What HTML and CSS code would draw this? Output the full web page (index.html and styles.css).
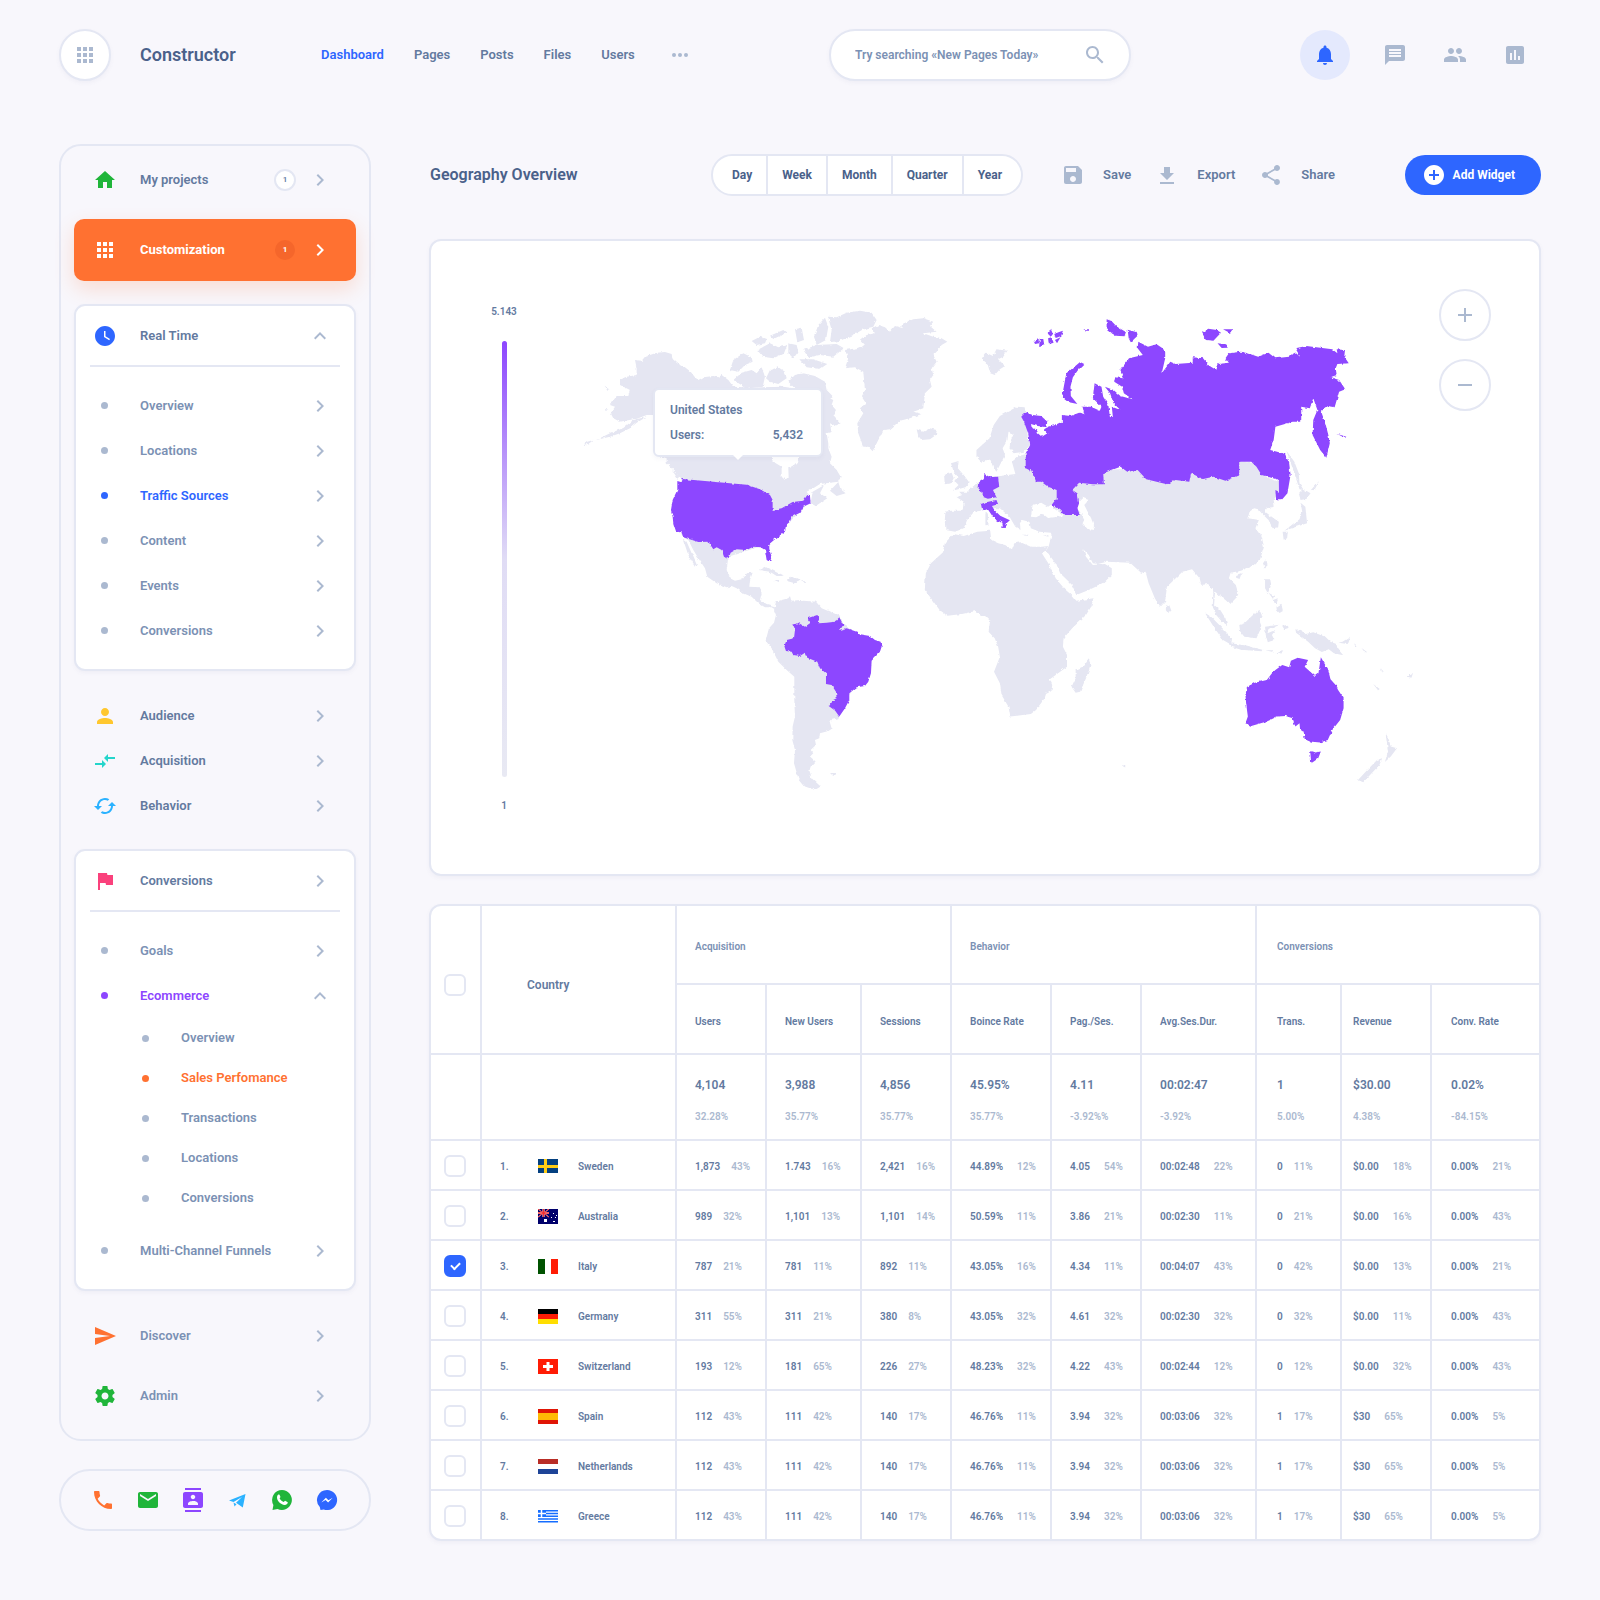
FILE: index.html
```html
<!DOCTYPE html>
<html lang="en">
<head>
  <meta charset="UTF-8">
  <meta name="viewport" content="width=device-width, initial-scale=1.0">
  <title>Constructor - Geography Overview</title>
  <link rel="stylesheet" href="styles.css">
</head>
<body>

  <!-- icon sprite -->
  <svg class="sprite" aria-hidden="true">
    <symbol id="i-apps" viewBox="0 0 24 24"><path d="M4 8h4V4H4v4zm6 12h4v-4h-4v4zm-6 0h4v-4H4v4zm0-6h4v-4H4v4zm6 0h4v-4h-4v4zm6-10v4h4V4h-4zm-6 4h4V4h-4v4zm6 6h4v-4h-4v4zm0 6h4v-4h-4v4z"/></symbol>
    <symbol id="i-dots" viewBox="0 0 24 24"><circle cx="6" cy="12" r="2"/><circle cx="12" cy="12" r="2"/><circle cx="18" cy="12" r="2"/></symbol>
    <symbol id="i-search" viewBox="0 0 24 24"><path d="M15.5 14h-.79l-.28-.27C15.41 12.59 16 11.11 16 9.5 16 5.91 13.09 3 9.5 3S3 5.91 3 9.5 5.91 16 9.5 16c1.61 0 3.09-.59 4.23-1.57l.27.28v.79l5 4.99L20.49 19l-4.99-5zm-6 0C7.01 14 5 11.99 5 9.5S7.01 5 9.5 5 14 7.01 14 9.5 11.99 14 9.5 14z"/></symbol>
    <symbol id="i-bell" viewBox="0 0 24 24"><path d="M12 22c1.1 0 2-.9 2-2h-4c0 1.1.89 2 2 2zm6-6v-5c0-3.07-1.64-5.64-4.5-6.32V4c0-.83-.67-1.5-1.5-1.5s-1.5.67-1.5 1.5v.68C7.63 5.36 6 7.92 6 11v5l-2 2v1h16v-1l-2-2z"/></symbol>
    <symbol id="i-message" viewBox="0 0 24 24"><path d="M20 2H4c-1.1 0-1.99.9-1.99 2L2 22l4-4h14c1.1 0 2-.9 2-2V4c0-1.1-.9-2-2-2zm-2 12H6v-2h12v2zm0-3H6V9h12v2zm0-3H6V6h12v2z"/></symbol>
    <symbol id="i-people" viewBox="0 0 24 24"><path d="M16 11c1.66 0 2.99-1.34 2.99-3S17.66 5 16 5c-1.66 0-3 1.34-3 3s1.34 3 3 3zm-8 0c1.66 0 2.99-1.34 2.99-3S9.66 5 8 5C6.34 5 5 6.34 5 8s1.34 3 3 3zm0 2c-2.33 0-7 1.17-7 3.5V19h14v-2.5c0-2.33-4.67-3.5-7-3.5zm8 0c-.29 0-.62.02-.97.05 1.16.84 1.97 1.97 1.97 3.45V19h6v-2.5c0-2.33-4.67-3.5-7-3.5z"/></symbol>
    <symbol id="i-chart" viewBox="0 0 24 24"><path d="M19 3H5c-1.1 0-2 .9-2 2v14c0 1.1.9 2 2 2h14c1.1 0 2-.9 2-2V5c0-1.1-.9-2-2-2zM9 17H7v-7h2v7zm4 0h-2V7h2v10zm4 0h-2v-4h2v4z"/></symbol>
    <symbol id="i-home" viewBox="0 0 24 24"><path d="M10 20v-6h4v6h5v-8h3L12 3 2 12h3v8z"/></symbol>
    <symbol id="i-clock" viewBox="0 0 24 24"><path d="M12 2C6.5 2 2 6.5 2 12s4.500 10 10 10 10-4.500 10-10S17.500 2 12 2zm4.200 14.200L11 13V7h1.500v5.200l4.500 2.700-.8 1.300z"/></symbol>
    <symbol id="i-person" viewBox="0 0 24 24"><path d="M12 12c2.210 0 4-1.790 4-4s-1.790-4-4-4-4 1.790-4 4 1.790 4 4 4zm0 2c-2.670 0-8 1.340-8 4v2h16v-2c0-2.660-5.330-4-8-4z"/></symbol>
    <symbol id="i-arrows" viewBox="0 0 24 24"><path d="M9 14H2v2h7v3l4-4-4-4v3zm6-1v-3h7V8h-7V5l-4 4 4 4z"/></symbol>
    <symbol id="i-cached" viewBox="0 0 24 24"><path d="M19 8l-4 4h3c0 3.310-2.690 6-6 6-1.010 0-1.970-.25-2.800-.7l-1.460 1.460C8.970 19.540 10.430 20 12 20c4.420 0 8-3.580 8-8h3l-4-4zM6 12c0-3.310 2.690-6 6-6 1.010 0 1.970.25 2.800.7l1.460-1.460C15.030 4.460 13.570 4 12 4c-4.420 0-8 3.580-8 8H1l4 4 4-4H6z"/></symbol>
    <symbol id="i-flag" viewBox="0 0 24 24"><path d="M14.400 6L14 4H5v17h2v-7h5.600l.4 2h7V6z"/></symbol>
    <symbol id="i-send" viewBox="0 0 24 24"><path d="M2 21l21-9L2 3v7l15 2-15 2z"/></symbol>
    <symbol id="i-gear" viewBox="0 0 24 24"><path d="M19.430 12.980c.04-.32.07-.64.07-.98s-.03-.66-.07-.98l2.110-1.650c.19-.15.24-.42.12-.64l-2-3.460c-.12-.22-.39-.3-.61-.22l-2.490 1c-.52-.4-1.080-.73-1.690-.98l-.38-2.650C14.460 2.180 14.250 2 14 2h-4c-.25 0-.46.18-.49.42l-.38 2.650c-.61.25-1.170.59-1.690.98l-2.490-1c-.23-.09-.49 0-.61.22l-2 3.460c-.13.22-.07.49.12.64l2.110 1.650c-.04.32-.07.65-.07.98s.03.66.07.98l-2.110 1.650c-.19.15-.24.42-.12.64l2 3.460c.12.22.39.3.61.22l2.490-1c.52.4 1.080.73 1.690.98l.38 2.650c.03.24.24.42.49.42h4c.25 0 .46-.18.49-.42l.38-2.650c.61-.25 1.170-.59 1.690-.98l2.490 1c.23.09.49 0 .61-.22l2-3.460c.12-.22.07-.49-.12-.64l-2.110-1.650zM12 15.500c-1.930 0-3.500-1.570-3.500-3.500s1.570-3.500 3.500-3.500 3.500 1.570 3.500 3.500-1.570 3.500-3.500 3.500z"/></symbol>
    <symbol id="i-right" viewBox="0 0 24 24"><path d="M10 6L8.600 7.400l4.600 4.600-4.600 4.600L10 18l6-6z"/></symbol>
    <symbol id="i-up" viewBox="0 0 24 24"><path d="M12 8l-6 6 1.400 1.400 4.600-4.600 4.600 4.600L18 14z"/></symbol>
    <symbol id="i-save" viewBox="0 0 24 24"><path d="M17 3H5c-1.110 0-2 .9-2 2v14c0 1.100.89 2 2 2h14c1.100 0 2-.9 2-2V7l-4-4zm-5 16c-1.660 0-3-1.340-3-3s1.340-3 3-3 3 1.340 3 3-1.340 3-3 3zm3-10H5V5h10v4z"/></symbol>
    <symbol id="i-export" viewBox="0 0 24 24"><path d="M19 10h-4V4H9v6H5l7 7 7-7zM5 19v2h14v-2H5z"/></symbol>
    <symbol id="i-share" viewBox="0 0 24 24"><path d="M18 16.080c-.76 0-1.440.3-1.960.77L8.910 12.700c.05-.23.09-.46.09-.7s-.04-.47-.09-.7l7.050-4.110c.54.5 1.250.81 2.040.81 1.660 0 3-1.340 3-3s-1.340-3-3-3-3 1.340-3 3c0 .24.04.47.09.7L8.040 9.810C7.500 9.310 6.790 9 6 9c-1.660 0-3 1.340-3 3s1.340 3 3 3c.79 0 1.500-.31 2.040-.81l7.120 4.160c-.05.21-.08.43-.08.65 0 1.610 1.310 2.920 2.920 2.920s2.920-1.310 2.920-2.920-1.310-2.920-2.920-2.920z"/></symbol>
    <symbol id="i-add" viewBox="0 0 24 24"><path d="M12 2C6.480 2 2 6.480 2 12s4.480 10 10 10 10-4.480 10-10S17.520 2 12 2zm5 11h-4v4h-2v-4H7v-2h4V7h2v4h4v2z"/></symbol>
    <symbol id="i-phone" viewBox="0 0 24 24"><path d="M6.620 10.790c1.440 2.830 3.760 5.140 6.590 6.590l2.200-2.200c.27-.27.67-.36 1.020-.24 1.120.37 2.330.57 3.570.57.55 0 1 .45 1 1V20c0 .55-.45 1-1 1-9.390 0-17-7.610-17-17 0-.55.45-1 1-1h3.500c.55 0 1 .45 1 1 0 1.250.2 2.450.57 3.570.11.35.03.74-.25 1.020l-2.200 2.200z"/></symbol>
    <symbol id="i-mail" viewBox="0 0 24 24"><path d="M20 4H4c-1.100 0-1.990.9-1.990 2L2 18c0 1.100.9 2 2 2h16c1.100 0 2-.9 2-2V6c0-1.100-.9-2-2-2zm0 4l-8 5-8-5V6l8 5 8-5v2z"/></symbol>
    <symbol id="i-contacts" viewBox="0 0 24 24"><path d="M20 0H4v2h16V0zM4 24h16v-2H4v2zM20 4H4c-1.100 0-2 .9-2 2v12c0 1.100.9 2 2 2h16c1.100 0 2-.9 2-2V6c0-1.100-.9-2-2-2zm-8 2.750c1.240 0 2.250 1.010 2.250 2.250s-1.010 2.250-2.250 2.250S9.750 10.240 9.750 9 10.760 6.750 12 6.750zM17 17H7v-1.500c0-1.670 3.330-2.500 5-2.500s5 .83 5 2.500V17z"/></symbol>
    <symbol id="i-telegram" viewBox="0 0 24 24"><path d="M20.500 6L4 12.600l4.500 1.500 8.500-5-6 5.700 6.800 4.700z"/><path d="M8.500 14.600l1 3.900 2-2.200z"/></symbol>
    <symbol id="i-whatsapp" viewBox="0 0 24 24"><path d="M12 2a10 10 0 0 0-8.600 15L2.500 22l5-1A10 10 0 1 0 12 2z"/><path fill="#fff" d="M8.300 6.600c.4-.3 1-.3 1.200.2l.9 1.900c.1.400 0 .7-.8 1.600.8 1.700 2.200 3 4 3.800l1.200-1.100c.2-.2.4-.2.7-.1l1.900 1c.4.200.4.500.3.900-.3 1.400-1.600 2.300-3 2.200-4.200-.6-8-4.500-7.700-8.100.1-1 .6-1.800 1.300-2.300z"/></symbol>
    <symbol id="i-messenger" viewBox="0 0 24 24"><path d="M12 2a10 10 0 0 0-7.200 16.900L5.500 22l3.200-.6A10 10 0 1 0 12 2z"/><path fill="#fff" d="M6.300 14.600l4.600-4.900 2.500 2.500 4.300-2.500-4.600 4.900-2.500-2.500z"/></symbol>

    <symbol id="f-se" viewBox="0 0 20 15"><path fill="#044080" d="M0 0h20v14H0z"/><path fill="#ffcc14" d="M6 0h3v14H6zM0 6h20v3H0z"/></symbol>
    <symbol id="f-au" viewBox="0 0 20 15"><path fill="#00006b" d="M0 0h20v15H0z"/><path stroke="#fff" d="M0 0l11 8M11 0L0 8"/><path stroke="#fff" stroke-width="2" d="M5.500 0v8M0 4h11"/><path stroke="#f22f2f" stroke-width="1" d="M0 0l11 8M11 0L0 8"/><path stroke="#f22f2f" stroke-width="1.500" d="M5.500 0v8M0 4h11"/><path fill="#fff" d="M6 10h3v3H6zM15 4h1v1h-1zM18 6h1v1h-1zM13 8h1v1h-1zM15 12h2v1h-2zM17 8h1v1h-1z"/></symbol>
    <symbol id="f-it" viewBox="0 0 20 15"><path fill="#fff" d="M0 0h20v15H0z"/><path fill="#005200" d="M0 0h7v15H0z"/><path fill="#ff1c05" d="M13 0h7v15h-7z"/></symbol>
    <symbol id="f-de" viewBox="0 0 20 15"><path d="M0 0h20v5H0z"/><path fill="#ff1c05" d="M0 5h20v5H0z"/><path fill="#ffde00" d="M0 10h20v5H0z"/></symbol>
    <symbol id="f-ch" viewBox="0 0 20 15"><path fill="#ff1c05" d="M0 0h20v15H0z"/><path fill="#fff" d="M8.500 3h3v3H15v3h-3.500v3h-3V9H5V6h3.500z"/></symbol>
    <symbol id="f-es" viewBox="0 0 20 15"><path fill="#e01505" d="M0 0h20v15H0z"/><path fill="#ffba05" d="M0 4h20v7H0z"/></symbol>
    <symbol id="f-nl" viewBox="0 0 20 15"><path fill="#fff" d="M0 0h20v15H0z"/><path fill="#b92d26" d="M0 0h20v5H0z"/><path fill="#1e4497" d="M0 10h20v5H0z"/></symbol>
    <symbol id="f-gr" viewBox="0 0 20 15"><path fill="#fff" d="M0 1h20v13H0z"/><path stroke="#156dff" stroke-width="1.500" d="M0 1.750h20M0 4.500h20M0 7.250h20M0 10h20M0 12.750h20"/><path fill="#156dff" d="M0 1h8v7H0z"/><path stroke="#fff" stroke-width="1.500" d="M3.500 1v7M0 4.500h8"/></symbol>
  </svg>

  <header class="header">
    <div class="brand">
      <button class="apps-btn" aria-label="Apps"><svg class="icon"><use href="#i-apps"/></svg></button>
      <a class="brand-name" href="#">Constructor</a>
    </div>
    <nav class="top-nav">
      <a class="active" href="#">Dashboard</a>
      <a href="#">Pages</a>
      <a href="#">Posts</a>
      <a href="#">Files</a>
      <a href="#">Users</a>
      <button class="more" aria-label="More"><svg class="icon"><use href="#i-dots"/></svg></button>
    </nav>
    <form class="search">
      <input type="text" aria-label="Search" placeholder="Try searching «New Pages Today»">
      <button type="button" aria-label="Find"><svg class="icon"><use href="#i-search"/></svg></button>
    </form>
    <div class="header-actions">
      <button class="round bell" aria-label="Notifications"><svg class="icon"><use href="#i-bell"/></svg></button>
      <button class="round" aria-label="Messages"><svg class="icon"><use href="#i-message"/></svg></button>
      <button class="round" aria-label="People"><svg class="icon"><use href="#i-people"/></svg></button>
      <button class="round" aria-label="Reports"><svg class="icon"><use href="#i-chart"/></svg></button>
    </div>
  </header>

  <div class="layout">
    <aside class="side">
      <nav class="sidebar">
        <a class="item" href="#"><svg class="icon green"><use href="#i-home"/></svg><span class="label">My projects</span><span class="badge">1</span><svg class="icon chevron"><use href="#i-right"/></svg></a>
        <a class="item custom" href="#"><svg class="icon"><use href="#i-apps"/></svg><span class="label">Customization</span><span class="badge">1</span><svg class="icon chevron"><use href="#i-right"/></svg></a>

        <section class="group">
          <a class="item group-head" href="#"><svg class="icon blue"><use href="#i-clock"/></svg><span class="label">Real Time</span><svg class="icon chevron"><use href="#i-up"/></svg></a>
          <div class="group-list">
            <a class="item light" href="#"><i class="dot"></i><span class="label">Overview</span><svg class="icon chevron"><use href="#i-right"/></svg></a>
            <a class="item light" href="#"><i class="dot"></i><span class="label">Locations</span><svg class="icon chevron"><use href="#i-right"/></svg></a>
            <a class="item light is-blue" href="#"><i class="dot"></i><span class="label">Traffic Sources</span><svg class="icon chevron"><use href="#i-right"/></svg></a>
            <a class="item light" href="#"><i class="dot"></i><span class="label">Content</span><svg class="icon chevron"><use href="#i-right"/></svg></a>
            <a class="item light" href="#"><i class="dot"></i><span class="label">Events</span><svg class="icon chevron"><use href="#i-right"/></svg></a>
            <a class="item light" href="#"><i class="dot"></i><span class="label">Conversions</span><svg class="icon chevron"><use href="#i-right"/></svg></a>
          </div>
        </section>

        <div class="plain">
          <a class="item" href="#"><svg class="icon yellow"><use href="#i-person"/></svg><span class="label">Audience</span><svg class="icon chevron"><use href="#i-right"/></svg></a>
          <a class="item" href="#"><svg class="icon teal"><use href="#i-arrows"/></svg><span class="label">Acquisition</span><svg class="icon chevron"><use href="#i-right"/></svg></a>
          <a class="item" href="#"><svg class="icon sky"><use href="#i-cached"/></svg><span class="label">Behavior</span><svg class="icon chevron"><use href="#i-right"/></svg></a>
        </div>

        <section class="group">
          <a class="item group-head" href="#"><svg class="icon pink"><use href="#i-flag"/></svg><span class="label">Conversions</span><svg class="icon chevron"><use href="#i-right"/></svg></a>
          <div class="group-list">
            <a class="item light" href="#"><i class="dot"></i><span class="label">Goals</span><svg class="icon chevron"><use href="#i-right"/></svg></a>
            <a class="item light is-purple" href="#"><i class="dot"></i><span class="label">Ecommerce</span><svg class="icon chevron"><use href="#i-up"/></svg></a>
            <div class="sub-list">
              <a class="item light" href="#"><i class="dot"></i><span class="label">Overview</span></a>
              <a class="item light is-orange" href="#"><i class="dot"></i><span class="label">Sales Perfomance</span></a>
              <a class="item light" href="#"><i class="dot"></i><span class="label">Transactions</span></a>
              <a class="item light" href="#"><i class="dot"></i><span class="label">Locations</span></a>
              <a class="item light" href="#"><i class="dot"></i><span class="label">Conversions</span></a>
            </div>
            <a class="item light" href="#"><i class="dot"></i><span class="label">Multi-Channel Funnels</span><svg class="icon chevron"><use href="#i-right"/></svg></a>
          </div>
        </section>

        <div class="footer-links">
          <a class="item light" href="#"><svg class="icon orange"><use href="#i-send"/></svg><span class="label">Discover</span><svg class="icon chevron"><use href="#i-right"/></svg></a>
          <a class="item light" href="#"><svg class="icon green"><use href="#i-gear"/></svg><span class="label">Admin</span><svg class="icon chevron"><use href="#i-right"/></svg></a>
        </div>
      </nav>

      <div class="social">
        <a href="#" aria-label="Phone"><svg class="icon orange"><use href="#i-phone"/></svg></a>
        <a href="#" aria-label="Mail"><svg class="icon green"><use href="#i-mail"/></svg></a>
        <a href="#" aria-label="Contacts"><svg class="icon purple"><use href="#i-contacts"/></svg></a>
        <a href="#" aria-label="Telegram"><svg class="icon sky"><use href="#i-telegram"/></svg></a>
        <a href="#" aria-label="WhatsApp"><svg class="icon green"><use href="#i-whatsapp"/></svg></a>
        <a href="#" aria-label="Messenger"><svg class="icon blue"><use href="#i-messenger"/></svg></a>
      </div>
    </aside>

    <main class="main">
      <div class="toolbar">
        <h1>Geography Overview</h1>
        <div class="periods">
          <button>Day</button>
          <button>Week</button>
          <button>Month</button>
          <button>Quarter</button>
          <button>Year</button>
        </div>
        <div class="tools">
          <button><svg class="icon"><use href="#i-save"/></svg>Save</button>
          <button><svg class="icon"><use href="#i-export"/></svg>Export</button>
          <button><svg class="icon"><use href="#i-share"/></svg>Share</button>
        </div>
        <button class="add-widget"><svg class="icon"><use href="#i-add"/></svg>Add Widget</button>
      </div>

      <section class="card map-card">
        <div class="legend">
          <span>5.143</span>
          <div class="legend-bar"></div>
          <span>1</span>
        </div>
        <div class="map">
          <svg class="world" viewBox="0 0 840 500" role="img" aria-label="Users by country">
            <defs>
              <!-- roughens the coastlines -->
              <filter id="coast" x="0" y="0" width="100%" height="100%">
                <feTurbulence type="fractalNoise" baseFrequency="0.25" numOctaves="2" seed="4" result="n"/>
                <feDisplacementMap in="SourceGraphic" in2="n" scale="3" xChannelSelector="R" yChannelSelector="G"/>
              </filter>
            </defs>
            <g filter="url(#coast)">
              <!-- americas -->
              <g transform="translate(-10 -10) scale(.3333)">
                <g class="land">
                  <path d="M195 210L215 212 225 200 240 195 260 188 285 186 305 192 308 207 322 220 345 232 362 245 375 262 385 270 400 262 430 258 445 262 455 255 475 270 490 290 520 292 545 296 580 292 640 290 680 296 720 290 760 292 770 320 790 330 785 345 798 360 790 375 812 400 795 408 780 400 785 425 770 430 775 460 775 475 785 500 780 520 800 540 812 560 805 575 780 578 750 582 730 595 710 605 720 620 715 640 690 665 640 715 600 760 475 800 470 840 480 865 495 872 515 868 528 850 548 848 540 870 538 890 570 892 575 910 570 930 590 942 612 948 618 960 605 952 585 952 565 940 545 920 520 910 500 895 485 888 470 892 440 880 412 860 405 835 385 805 370 780 355 750 338 742 330 720 315 650 335 570 315 545 290 520 290 505 260 495 255 400 250 375 230 375 205 385 190 388 150 395 130 385 122 370 135 350 120 345 140 318 175 318 180 300 150 285 150 268 170 260 200 255 200 235z"/>
                  <path d="M338 745L350 755 365 790 382 828 375 828 355 795z"/>
                  <path d="M230 380L200 398 180 415 150 430 120 440 78 450 120 430 160 414 190 390zM35 467L52 455 72 449 58 460zM104 290l14 8-4 6zM102 358l12 0-6 5z"/>
                  <path d="M480 240L490 210 520 190 545 202 548 215 525 225 505 245zM490 270L515 248 545 240 560 250 575 232 585 260 578 292 530 295zM588 265L600 240 625 232 645 245 650 265 625 282 600 275z"/>
                  <path d="M545 153L570 140 590 148 585 160 560 165zM600 137L640 120 650 128 610 147zM562 180L600 160 625 172 652 165 642 190 610 205 578 200zM675 118L695 113 702 150 682 157zM655 160L680 165 685 185 670 205 655 190zM732 140L745 105 765 83 775 110 768 150 740 165z"/>
                  <path d="M774 80L800 82 830 68 870 62 905 68 920 90 910 110 880 118 850 135 810 152 780 157 785 120zM700 180L740 165 800 162 822 175 790 200 750 195 715 202zM688 208L730 208 772 222 750 237 710 232zM655 275L675 255 700 250 735 258 765 275 770 300 790 320 760 340 700 320z"/>
                  <path d="M825 180L860 175 885 165 872 150 890 135 915 130 905 115 925 105 945 112 960 125 975 108 1000 115 990 105 1030 88 1060 85 1090 95 1080 108 1100 125 1060 130 1090 140 1115 145 1132 155 1115 165 1100 185 1090 195 1100 215 1085 235 1090 255 1080 270 1085 290 1065 310 1060 355 1030 365 1055 372 1020 385 990 392 960 418 940 420 925 450 908 484 895 470 880 470 865 430 862 400 880 370 870 355 888 340 875 320 885 300 880 245 855 232 825 235 835 205z"/>
                  <path d="M1040 418L1060 425 1080 415 1100 420 1098 435 1080 448 1055 450 1045 438z"/>
                  <path d="M566 840L585 830 610 842 642 858 620 858 600 845zM648 872L660 860 692 868 675 880zM613 870h14v6zM692 871h13v5zM780 602L805 576 812 598 827 610 800 618zM728 605L762 586 750 610 772 625 737 648 722 640zM306 540l24 20-6 8z"/>
                  <path d="M618 935L635 930 655 925 660 918 665 935 700 932 738 935 755 955 780 965 812 978 818 1000 880 1050 885 1150 820 1240 805 1285 778 1292 785 1315 770 1325 750 1330 748 1345 735 1350 738 1365 722 1380 730 1390 720 1400 737 1415 722 1430 718 1445 725 1465 752 1490 735 1500 705 1490 685 1465 672 1420 675 1380 667 1350 668 1310 675 1280 673 1230 673 1160 650 1140 625 1115 605 1075 587 1052 597 1015 612 998 618 975 612 960z"/>
                  <path d="M780 1449h18l-8 9z"/>
                </g>
                <path class="sea" d="M600 495L615 518 635 530 635 560 645 570 656 560 655 535 672 525 684 512 684 495z"/>
                <g class="land-active">
                  <path d="M338 567L530 584 570 598 600 615 608 630 608 660 635 655 668 636 700 632 712 615 720 618 722 640 700 650 690 668 665 680 660 695 648 705 645 725 615 748 598 762 598 780 605 800 600 816 590 810 585 780 572 772 550 770 530 780 500 778 482 788 475 808 462 800 455 780 440 772 430 778 415 755 385 756 340 742 335 728 318 724 310 700 308 680 303 660 308 630 322 600 322 573 335 577z"/>
                  <path d="M643 1068L650 1050 672 1045 675 1020 668 1005 685 998 705 1010 722 998 712 985 742 975 748 1000 770 998 795 995 808 982 820 1005 810 1020 830 1015 860 1025 868 1033 900 1038 915 1050 932 1055 935 1070 930 1085 905 1112 903 1150 895 1175 885 1188 860 1192 838 1210 838 1230 825 1255 808 1280 795 1262 776 1248 785 1232 800 1225 798 1205 785 1185 768 1182 768 1150 750 1135 742 1115 712 1103 705 1088 690 1098 670 1095 665 1085 648 1083z"/>
                </g>
              </g>
              <!-- europe, africa, asia, oceania -->
              <g transform="translate(320 -10) scale(.3444 .3333)">
                <g class="land">
                  <path d="M238 205L250 188 270 198 280 178 312 182 300 200 285 208 305 228 290 238 275 255 262 250 255 225 240 212z"/>
                  <path d="M128 555L150 548 156 565 148 580 130 583zM148 520L170 513 168 535 185 555 202 578 190 592 153 602 170 585 158 572 168 560 156 545z"/>
                  <path d="M222 480L260 445 272 405 290 378 340 350 362 352 365 372 355 385 368 410 372 450 378 465 360 485 330 490 318 475 320 455 330 432 315 425 312 450 298 475 305 495 290 525 280 545 270 530 262 508 235 515 222 500z"/>
                  <path d="M132 665L145 662 182 662 185 635 165 622 180 615 172 605 195 605 220 582 232 575 248 572 245 552 258 560 290 558 335 552 325 515 345 498 375 490 380 540 600 540 1000 515 1030 520 1060 560 1100 575 1098 610 1085 630 1088 650 1065 655 1060 665 1085 685 1100 695 1098 712 1082 715 1070 690 1050 670 1040 658 1028 655 1015 665 1010 685 1030 688 1042 690 1032 715 1050 740 1057 770 1045 810 1030 825 990 842 960 848 955 865 975 885 982 910 975 925 958 943 945 930 925 915 915 905 912 945 930 960 945 985 950 1005 935 995 918 975 908 950 910 905 895 882 875 885 870 865 848 838 820 845 775 890 770 935 755 952 740 925 722 880 713 845 700 848 668 818 600 815 575 822 560 820 548 795 532 778 540 800 560 825 595 822 615 835 615 855 590 880 548 900 512 915 495 880 465 850 455 825 430 790 422 785 432 768 440 735 438 728 405 725 380 715 375 695 355 690 348 700 350 720 335 710 318 680 290 655 240 655 235 662 215 665 195 690 185 715 160 725 132 720 130 690z"/>
                  <path d="M155 732L185 738 225 725 262 722 265 750 285 760 305 765 325 778 332 760 350 757 380 770 412 770 430 768 422 786 412 790 432 822 452 865 478 897 498 915 512 932 562 925 555 950 540 975 500 1015 475 1045 473 1070 485 1095 485 1130 435 1168 442 1185 440 1200 425 1208 420 1225 395 1260 380 1272 345 1277 320 1280 315 1250 295 1215 290 1180 273 1145 290 1100 285 1070 275 1045 257 1025 262 990 250 978 235 978 220 963 180 972 138 977 115 960 90 925 72 900 75 850 90 820 125 787 130 760z"/>
                  <path d="M510 1140L530 1130 548 1105 553 1125 540 1165 523 1205 510 1208 498 1190 510 1165zM772 943l10 3 6 16-10 7-6-8z"/>
                  <path d="M885 968L905 982 930 1008 964 1045 962 1064 938 1050 915 1017zM960 1060L1000 1066 1052 1079 1050 1084 990 1079 962 1070zM1060 1081h24v5zM1090 1092l23-12-6 11z"/>
                  <path d="M985 1005L1000 1000 1040 960 1054 975 1045 995 1050 1010 1035 1045 1000 1040 988 1025zM1060 1010L1102 1004 1070 1020 1067 1030 1090 1020 1080 1035 1087 1050 1068 1057 1062 1035z"/>
                  <path d="M1060 868L1072 868 1076 890 1068 910 1060 895zM1093 950l14-9 5 22-10 6-8-9zM1070 908l16 10-3 9zM1083 930l14-5-3 17zM1054 820l9-13 4 16-7 14zM976 855l16-6-6 18-10-4z"/>
                  <path d="M1148 1018L1165 1020 1175 1033 1200 1027 1235 1040 1250 1055 1267 1062 1270 1075 1287 1096 1260 1090 1245 1078 1225 1086 1205 1075 1185 1055 1150 1028zM1110 1008l16-4 2 10-12 4zM1273 1058L1290 1054 1306 1043 1300 1062zM1319 1060l8 8-5 2zM1340 1074l16 12-5 3zM1397 1135l7 10-4 4zM1374 1182l20 16-6 3zM1473 1160l16-9-4 12z"/>
                  <path d="M1158 610L1170 596 1192 610 1180 627 1163 630zM1163 638L1177 650 1182 700 1160 707 1140 714 1116 722 1140 703 1160 688 1168 665zM1111 725l15 0-2 20-10 4zM1122 482L1145 515 1158 550 1160 580 1172 600 1160 598 1145 550zM1193 600l24-27-14 28z"/>
                  <path d="M1410 1330L1418 1345 1425 1370 1443 1375 1425 1400 1408 1416 1417 1385zM1400 1405L1392 1425 1345 1477 1330 1470 1350 1448 1385 1410zM248 670h7l2 34-9 2zM415 736h16v4zM353 734h20v4zM646 1428h8v5z"/>
                </g>
                <path class="sea" d="M380 680L385 645 410 638 430 650 445 640 445 655 475 675 460 680 430 684 415 672 395 682zM508 645L530 623 548 630 535 645 545 665 555 685 568 720 545 718 530 700 535 690 525 670z"/>
                <g class="land-active">
                  <path d="M352 380L365 367 385 375 410 378 428 395 425 412 400 408 380 402 385 415 398 418 400 430 412 440 428 430 418 418 432 410 450 405 470 395 470 375 495 378 520 368 535 372 530 350 555 350 580 362 585 350 560 325 565 280 585 290 590 320 605 345 610 385 618 380 615 350 640 360 620 340 610 310 595 290 620 300 640 318 675 328 650 310 645 290 622 275 625 262 650 265 640 240 665 205 705 195 690 175 692 155 720 170 745 163 770 180 770 205 760 250 785 215 800 222 850 218 850 202 880 205 895 225 918 240 925 222 955 218 945 205 955 190 990 185 1010 190 1040 200 1070 188 1090 205 1130 200 1145 185 1162 200 1148 175 1180 168 1255 178 1270 190 1268 178 1292 180 1290 200 1303 220 1270 222 1265 235 1268 255 1250 262 1275 270 1293 298 1275 305 1262 352 1240 348 1222 362 1235 400 1245 440 1248 460 1238 503 1220 480 1198 435 1200 390 1212 360 1200 325 1190 355 1165 350 1165 395 1140 395 1090 410 1085 450 1075 480 1095 485 1118 492 1130 520 1134 555 1125 610 1110 628 1092 628 1090 600 1100 605 1100 570 1050 555 1035 530 1020 515 985 515 985 555 945 572 910 560 880 567 845 550 840 575 800 570 775 583 745 575 715 568 690 540 660 545 640 530 590 550 592 583 560 583 520 578 500 600 515 610 520 640 515 655 522 675 480 675 465 660 440 645 455 625 455 600 430 590 410 575 395 575 385 545 365 535 365 490 378 465 372 430 360 395z"/>
                  <path d="M523 216L535 222 517 240 502 262 495 290 496 318 515 342 488 336 470 322 476 288 483 250 503 233z"/>
                  <path d="M388 153L402 148 404 160 392 162zM406 145L416 147 419 166 404 171zM430 132L438 118 444 132 438 140zM430 145L440 142 446 158 432 163zM448 132L462 126 473 122 468 138 452 144zM450 150L466 142 456 160z"/>
                  <path d="M600 88L614 93 630 110 656 126 652 139 625 137 600 117zM661 119L688 127 690 137 670 157 664 145zM877 128L895 116 920 120 932 128 910 152 888 150zM938 118h28l-8 11zM922 160l22 3 8 10-18 1zM535 118h11v5zM1270 432l26 8-4 4z"/>
                  <path d="M230 577L243 568 245 552 262 562 285 560 288 590 270 600 280 622 255 626 240 620 240 607 228 602z"/>
                  <path d="M235 642L250 637 280 630 285 643 267 648 274 660 291 677 319 691 311 698 306 713 297 714 299 701 272 684 255 658 239 661z"/>
                  <path d="M1008 1190L1030 1178 1065 1170 1080 1150 1090 1140 1110 1125 1130 1132 1135 1112 1155 1103 1185 1110 1175 1130 1205 1158 1215 1150 1222 1102 1235 1125 1242 1135 1250 1168 1265 1185 1272 1200 1288 1225 1288 1255 1278 1290 1255 1320 1242 1350 1220 1358 1190 1355 1175 1348 1172 1325 1162 1322 1160 1300 1148 1310 1140 1285 1120 1278 1095 1280 1065 1295 1020 1308 1003 1300 1010 1280 1005 1240 1003 1215z"/>
                  <path d="M1191 1383L1205 1388 1222 1385 1214 1406 1194 1420z"/>
                </g>
              </g>
            </g>
          </svg>
          <div class="map-tip">
            <strong>United States</strong>
            <div class="map-tip-row"><span>Users:</span><span>5,432</span></div>
          </div>
        </div>
        <div class="zoom">
          <button class="zoom-in" aria-label="Zoom in"></button>
          <button class="zoom-out" aria-label="Zoom out"></button>
        </div>
      </section>

      <section class="card table-card">
        <table class="stats">
          <colgroup>
            <col class="c-check"><col class="c-country"><col class="c-90"><col class="c-95"><col class="c-90"><col class="c-100"><col class="c-90"><col class="c-115"><col class="c-85"><col class="c-90"><col class="c-last">
          </colgroup>
          <thead>
            <tr class="head-groups">
              <th class="check" rowspan="2"><input type="checkbox" aria-label="Select all"></th>
              <th class="country-head" rowspan="2">Country</th>
              <th colspan="3">Acquisition</th>
              <th colspan="3">Behavior</th>
              <th class="wide" colspan="3">Conversions</th>
            </tr>
            <tr class="head-cols">
              <th>Users</th><th>New Users</th><th>Sessions</th>
              <th>Boince Rate</th><th>Pag./Ses.</th><th>Avg.Ses.Dur.</th>
              <th class="wide">Trans.</th><th class="tight">Revenue</th><th class="last">Conv. Rate</th>
            </tr>
          </thead>
          <tbody>
            <tr class="totals">
              <td></td><td></td>
              <td><b>4,104</b><small>32.28%</small></td>
              <td><b>3,988</b><small>35.77%</small></td>
              <td><b>4,856</b><small>35.77%</small></td>
              <td><b>45.95%</b><small>35.77%</small></td>
              <td><b>4.11</b><small>-3.92%%</small></td>
              <td><b>00:02:47</b><small>-3.92%</small></td>
              <td class="wide"><b>1</b><small>5.00%</small></td>
              <td class="tight"><b>$30.00</b><small>4.38%</small></td>
              <td class="last"><b>0.02%</b><small>-84.15%</small></td>
            </tr>
            <tr>
              <td class="check"><input type="checkbox" aria-label="Sweden"></td>
              <td><div class="country"><span>1.</span><svg class="flag"><use href="#f-se"/></svg>Sweden</div></td>
              <td>1,873<small>43%</small></td><td>1.743<small>16%</small></td><td>2,421<small>16%</small></td>
              <td>44.89%<small>12%</small></td><td>4.05<small>54%</small></td><td>00:02:48<small>22%</small></td>
              <td class="wide">0<small>11%</small></td><td class="tight">$0.00<small>18%</small></td><td class="last">0.00%<small>21%</small></td>
            </tr>
            <tr>
              <td class="check"><input type="checkbox" aria-label="Australia"></td>
              <td><div class="country"><span>2.</span><svg class="flag"><use href="#f-au"/></svg>Australia</div></td>
              <td>989<small>32%</small></td><td>1,101<small>13%</small></td><td>1,101<small>14%</small></td>
              <td>50.59%<small>11%</small></td><td>3.86<small>21%</small></td><td>00:02:30<small>11%</small></td>
              <td class="wide">0<small>21%</small></td><td class="tight">$0.00<small>16%</small></td><td class="last">0.00%<small>43%</small></td>
            </tr>
            <tr>
              <td class="check"><input type="checkbox" aria-label="Italy" checked></td>
              <td><div class="country"><span>3.</span><svg class="flag"><use href="#f-it"/></svg>Italy</div></td>
              <td>787<small>21%</small></td><td>781<small>11%</small></td><td>892<small>11%</small></td>
              <td>43.05%<small>16%</small></td><td>4.34<small>11%</small></td><td>00:04:07<small>43%</small></td>
              <td class="wide">0<small>42%</small></td><td class="tight">$0.00<small>13%</small></td><td class="last">0.00%<small>21%</small></td>
            </tr>
            <tr>
              <td class="check"><input type="checkbox" aria-label="Germany"></td>
              <td><div class="country"><span>4.</span><svg class="flag"><use href="#f-de"/></svg>Germany</div></td>
              <td>311<small>55%</small></td><td>311<small>21%</small></td><td>380<small>8%</small></td>
              <td>43.05%<small>32%</small></td><td>4.61<small>32%</small></td><td>00:02:30<small>32%</small></td>
              <td class="wide">0<small>32%</small></td><td class="tight">$0.00<small>11%</small></td><td class="last">0.00%<small>43%</small></td>
            </tr>
            <tr>
              <td class="check"><input type="checkbox" aria-label="Switzerland"></td>
              <td><div class="country"><span>5.</span><svg class="flag"><use href="#f-ch"/></svg>Switzerland</div></td>
              <td>193<small>12%</small></td><td>181<small>65%</small></td><td>226<small>27%</small></td>
              <td>48.23%<small>32%</small></td><td>4.22<small>43%</small></td><td>00:02:44<small>12%</small></td>
              <td class="wide">0<small>12%</small></td><td class="tight">$0.00<small>32%</small></td><td class="last">0.00%<small>43%</small></td>
            </tr>
            <tr>
              <td class="check"><input type="checkbox" aria-label="Spain"></td>
              <td><div class="country"><span>6.</span><svg class="flag"><use href="#f-es"/></svg>Spain</div></td>
              <td>112<small>43%</small></td><td>111<small>42%</small></td><td>140<small>17%</small></td>
              <td>46.76%<small>11%</small></td><td>3.94<small>32%</small></td><td>00:03:06<small>32%</small></td>
              <td class="wide">1<small>17%</small></td><td class="tight">$30<small>65%</small></td><td class="last">0.00%<small>5%</small></td>
            </tr>
            <tr>
              <td class="check"><input type="checkbox" aria-label="Netherlands"></td>
              <td><div class="country"><span>7.</span><svg class="flag"><use href="#f-nl"/></svg>Netherlands</div></td>
              <td>112<small>43%</small></td><td>111<small>42%</small></td><td>140<small>17%</small></td>
              <td>46.76%<small>11%</small></td><td>3.94<small>32%</small></td><td>00:03:06<small>32%</small></td>
              <td class="wide">1<small>17%</small></td><td class="tight">$30<small>65%</small></td><td class="last">0.00%<small>5%</small></td>
            </tr>
            <tr>
              <td class="check"><input type="checkbox" aria-label="Greece"></td>
              <td><div class="country"><span>8.</span><svg class="flag"><use href="#f-gr"/></svg>Greece</div></td>
              <td>112<small>43%</small></td><td>111<small>42%</small></td><td>140<small>17%</small></td>
              <td>46.76%<small>11%</small></td><td>3.94<small>32%</small></td><td>00:03:06<small>32%</small></td>
              <td class="wide">1<small>17%</small></td><td class="tight">$30<small>65%</small></td><td class="last">0.00%<small>5%</small></td>
            </tr>
          </tbody>
        </table>
      </section>
    </main>
  </div>
</body>
</html>
```

FILE: styles.css
```css
:root {
  --bg: #f8f7fc;
  --line: #e4e7f3;
  --dark: #4a618a;
  --text: #637a9f;
  --light: #7b91b4;
  --muted: #abb9d0;
  --blue: #2e66ff;
  --purple: #8d46ff;
  --orange: #ff7131;
  --green: #20b53a;
}

* {
  box-sizing: border-box;
}

body {
  margin: 0;
  padding: 29px 59px 59px;
  background: var(--bg);
  color: var(--text);
  font-family: Roboto, "Liberation Sans", sans-serif;
  font-size: 13px;
  font-weight: 600;
  line-height: 16px;
}

a {
  color: inherit;
  text-decoration: none;
}

button {
  padding: 0;
  border: 0;
  background: none;
  color: inherit;
  font: inherit;
  cursor: pointer;
}

.sprite {
  position: absolute;
  width: 0;
  height: 0;
}

.icon {
  display: block;
  flex: none;
  width: 24px;
  height: 24px;
  fill: var(--muted);
}

.icon.green { fill: var(--green); }
.icon.blue { fill: var(--blue); }
.icon.purple { fill: var(--purple); }
.icon.orange { fill: var(--orange); }
.icon.yellow { fill: #ffc72e; }
.icon.teal { fill: #25d5cb; }
.icon.sky { fill: #2bb2ff; }
.icon.pink { fill: #fa417c; }

/* header */
.header {
  display: grid;
  grid-template-columns: 262px minmax(0, 508fr) 302px minmax(0, 410fr);
  align-items: center;
  margin-bottom: 63px;
}

.brand {
  display: flex;
  align-items: center;
  gap: 29px;
}

.apps-btn {
  display: grid;
  place-items: center;
  width: 52px;
  height: 52px;
  border: 2px solid var(--line);
  border-radius: 50%;
  background: #fff;
  box-shadow: 0 2px 4px rgba(100, 110, 160, 0.06);
}

.brand-name {
  color: var(--dark);
  font-size: 18px;
  line-height: 24px;
}

.top-nav {
  display: flex;
  align-items: center;
  gap: 30px;
}

.top-nav .active {
  color: var(--blue);
}

.more {
  margin-left: 3px;
}

.search {
  display: flex;
  align-items: center;
  height: 52px;
  padding: 0 22px 0 24px;
  border: 2px solid var(--line);
  border-radius: 26px;
  background: #fff;
  box-shadow: 0 2px 4px rgba(100, 110, 160, 0.06);
}

.search input {
  flex: 1;
  min-width: 0;
  padding: 0;
  border: 0;
  outline: 0;
  background: none;
  color: var(--text);
  font: inherit;
  font-size: 12px;
}

.search input::placeholder {
  color: var(--light);
  opacity: 1;
}

.header-actions {
  display: flex;
  justify-content: flex-end;
  gap: 10px;
  padding-right: 1px;
}

.round {
  display: grid;
  place-items: center;
  width: 50px;
  height: 50px;
  border-radius: 50%;
}

.round.bell {
  margin-right: 10px;
  background: #e4e9fd;
}

.bell .icon {
  fill: var(--blue);
}

.layout {
  display: grid;
  grid-template-columns: 312px minmax(0, 1fr);
  gap: 58px;
  align-items: start;
}

/* sidebar */
.sidebar {
  padding: 11px 13px 21px;
  border: 2px solid var(--line);
  border-radius: 22px;
}

.item {
  display: flex;
  align-items: center;
  gap: 23px;
  height: 45px;
  padding: 0 24px 0 19px;
}

.item .label {
  flex: 1;
}

.item.light {
  color: var(--light);
}

.badge {
  display: grid;
  place-items: center;
  width: 22px;
  height: 22px;
  margin-right: -11px;
  border: 2px solid var(--line);
  border-radius: 50%;
  background: #fff;
  font-size: 8px;
  line-height: 10px;
}

.item.custom {
  height: 62px;
  margin: 17px 0 23px;
  border-radius: 10px;
  background: var(--orange);
  box-shadow: 0 8px 20px rgba(255, 113, 49, 0.2);
  color: #fff;
  font-weight: 700;
}

.custom .icon {
  fill: #fff;
}

.custom .badge {
  border: 0;
  width: 20px;
  height: 20px;
  margin: 0 -10px 0 0;
  background: #f5662b;
}

.group {
  border: 2px solid var(--line);
  border-radius: 11px;
  background: #fff;
  box-shadow: 0 2px 4px rgba(100, 110, 160, 0.06);
}

.group .item {
  padding: 0 22px 0 17px;
}

.group .group-head {
  height: 61px;
  margin: 0 14px;
  padding: 0 8px 0 3px;
  border-bottom: 2px solid var(--line);
}

.group-list {
  padding: 16px 0;
}

.dot {
  width: 7px;
  height: 7px;
  margin: 0 9px 0 8px;
  border-radius: 50%;
  background: var(--muted);
}

.item.is-blue { color: var(--blue); }
.item.is-purple { color: var(--purple); }
.item.is-orange { color: var(--orange); }

.is-blue .dot,
.is-purple .dot,
.is-orange .dot {
  background: currentColor;
}

.sub-list {
  margin-bottom: 10px;
}

.sub-list .item {
  height: 40px;
  padding-left: 58px;
}

.plain {
  margin: 22px 0 21px;
}

.footer-links {
  display: grid;
  gap: 15px;
  margin-top: 22px;
}

.social {
  display: flex;
  align-items: center;
  justify-content: space-between;
  height: 62px;
  margin-top: 28px;
  padding: 0 30px;
  border: 2px solid var(--line);
  border-radius: 31px;
}

/* toolbar */
.toolbar {
  display: flex;
  align-items: center;
  margin: 10px 0 43px;
}

.toolbar h1 {
  flex: 0 0 281px;
  margin: 0 0 0 1px;
  color: var(--dark);
  font-size: 16px;
  font-weight: 600;
  line-height: 20px;
}

.periods {
  display: flex;
  height: 42px;
  border: 2px solid var(--line);
  border-radius: 21px;
  background: #fff;
  overflow: hidden;
}

.periods button {
  padding: 0 14px;
  color: var(--dark);
  font-size: 12px;
  font-weight: 700;
}

.periods button + button {
  border-left: 2px solid var(--line);
}

.periods button:first-child {
  padding-left: 19px;
}

.periods button:last-child {
  padding-right: 19px;
}

.tools {
  display: flex;
  gap: 24px;
  margin-left: 38px;
}

.tools button {
  display: flex;
  align-items: center;
  gap: 18px;
}

.add-widget {
  display: flex;
  align-items: center;
  gap: 7px;
  height: 40px;
  margin-left: auto;
  padding: 0 26px 0 17px;
  border-radius: 20px;
  background: var(--blue);
  color: #fff;
  font-size: 12px;
  font-weight: 700;
}

.add-widget .icon {
  fill: #fff;
}

/* map */
.card {
  border: 2px solid var(--line);
  border-radius: 12px;
  background: #fff;
  box-shadow: 0 2px 4px rgba(100, 110, 160, 0.06);
}

.map-card {
  display: flex;
  padding: 48px 48px 52px 59px;
}

.legend {
  display: flex;
  flex-direction: column;
  align-items: center;
  gap: 22px;
  width: 28px;
  margin: 16px 0 9px;
  font-size: 10px;
  line-height: 14px;
}

.legend-bar {
  flex: 1;
  width: 5px;
  border-radius: 3px;
  background: linear-gradient(var(--purple) 0%, #e0dcf5 50%, #e8e9f3 100%);
}

.map {
  position: relative;
  flex: 1;
  min-width: 0;
  margin: 11px 19px 22px 62px;
}

.world {
  display: block;
  width: 100%;
}

.land {
  fill: #e5e6f2;
}

.land-active {
  fill: var(--purple);
}

.sea {
  fill: #fff;
}

.map-tip {
  position: absolute;
  top: 88px;
  left: 73px;
  width: 170px;
  padding: 12px 18px 12px 15px;
  border: 2px solid var(--line);
  border-radius: 6px;
  background: #fff;
  font-size: 12px;
  box-shadow: 0 2px 4px rgba(100, 110, 160, 0.06);
}

.map-tip::after {
  content: "";
  position: absolute;
  top: 100%;
  left: 50%;
  margin-left: -5px;
  border: 5px solid transparent;
  border-top-color: #fff;
  border-bottom: 0;
}

.map-tip strong {
  display: block;
  margin-bottom: 9px;
  font-weight: inherit;
}

.map-tip-row {
  display: flex;
  justify-content: space-between;
}

.zoom {
  display: flex;
  flex-direction: column;
  gap: 18px;
}

.zoom button {
  display: grid;
  place-items: center;
  width: 52px;
  height: 52px;
  border: 2px solid var(--line);
  border-radius: 50%;
}

.zoom button::before,
.zoom-in::after {
  content: "";
  grid-area: 1 / 1;
  width: 14px;
  height: 2px;
  background: var(--muted);
}

.zoom button.zoom-in::after {
  width: 2px;
  height: 14px;
}

/* table */
.table-card {
  margin-top: 28px;
  overflow: hidden;
}

.stats {
  width: 100%;
  border-collapse: separate;
  border-spacing: 0;
  table-layout: fixed;
  font-size: 10px;
  line-height: 14px;
}

.c-check { width: 51px; }
.c-country { width: 195px; }
.c-85 { width: 85px; }
.c-90 { width: 90px; }
.c-95 { width: 95px; }
.c-100 { width: 100px; }
.c-115 { width: 115px; }
.c-last { width: 107px; }

.stats th,
.stats td {
  height: 50px;
  padding: 4px 0 0 18px;
  border-right: 2px solid var(--line);
  border-bottom: 2px solid var(--line);
  font-weight: 600;
  text-align: left;
  white-space: nowrap;
}

.stats .wide { padding-left: 20px; }
.stats .tight { padding-left: 11px; }
.stats .last { padding-left: 19px; }

.stats tr > .last,
.stats tr > :last-child {
  border-right: 0;
}

.stats tbody tr:last-child td {
  height: 48px;
  border-bottom: 0;
}

.stats .head-groups th {
  height: 79px;
  color: var(--light);
}

.stats .head-cols th {
  height: 70px;
  padding-top: 6px;
}

.stats .head-groups .country-head {
  padding: 10px 0 0 45px;
  color: var(--text);
  font-size: 12px;
}

.stats .check {
  padding: 2px 0 0 13px;
}

.stats .head-groups .check {
  padding-top: 10px;
}

.check input {
  display: block;
  appearance: none;
  width: 22px;
  height: 22px;
  margin: 0;
  border: 2px solid var(--line);
  border-radius: 6px;
  background: #fff;
}

.check input:checked {
  display: grid;
  place-items: center;
  border-color: var(--blue);
  background: var(--blue);
}

.check input:checked::before {
  content: "";
  width: 7px;
  height: 4px;
  margin-bottom: 2px;
  border: solid #fff;
  border-width: 0 0 2px 2px;
  transform: rotate(-45deg);
}

.stats b {
  display: block;
  margin-bottom: 18px;
  font-size: 12px;
  font-weight: 600;
}

.stats small {
  margin-left: 11px;
  color: var(--muted);
  font-size: 10px;
}

.stats td:nth-child(n+6) small {
  margin-left: 14px;
}

.stats td.wide small {
  margin-left: 11px;
}

.stats .totals td {
  height: 86px;
  padding-top: 7px;
}

.stats .totals td small {
  display: block;
  margin-left: 0;
}

.country {
  display: flex;
  align-items: center;
}

.country span {
  width: 38px;
}

.flag {
  width: 20px;
  height: 15px;
  margin: 0 20px 2px 0;
}
```
